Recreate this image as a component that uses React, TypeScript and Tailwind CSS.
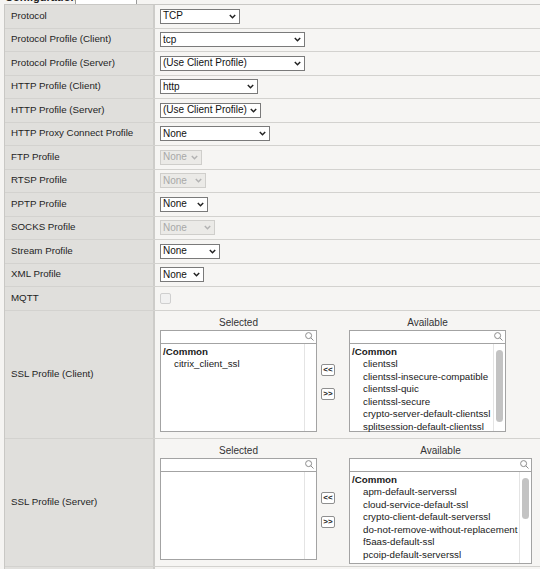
import clsx from 'clsx';

type SelectSpec = { value: string; width: string; disabled?: boolean };
type Row = { label: string; select?: SelectSpec; checkbox?: boolean };

const rows: Row[] = [
  { label: 'Protocol', select: { value: 'TCP', width: 'w-[80px]' } },
  { label: 'Protocol Profile (Client)', select: { value: 'tcp', width: 'w-[145px]' } },
  { label: 'Protocol Profile (Server)', select: { value: '(Use Client Profile)', width: 'w-[145px]' } },
  { label: 'HTTP Profile (Client)', select: { value: 'http', width: 'w-[98px]' } },
  { label: 'HTTP Profile (Server)', select: { value: '(Use Client Profile)', width: 'w-[101px]' } },
  { label: 'HTTP Proxy Connect Profile', select: { value: 'None', width: 'w-[110px]' } },
  { label: 'FTP Profile', select: { value: 'None', width: 'w-[42px]', disabled: true } },
  { label: 'RTSP Profile', select: { value: 'None', width: 'w-[46px]', disabled: true } },
  { label: 'PPTP Profile', select: { value: 'None', width: 'w-[48px]' } },
  { label: 'SOCKS Profile', select: { value: 'None', width: 'w-[55px]', disabled: true } },
  { label: 'Stream Profile', select: { value: 'None', width: 'w-[60px]' } },
  { label: 'XML Profile', select: { value: 'None', width: 'w-[44px]' } },
  { label: 'MQTT', checkbox: true },
];

function Chevron({ disabled }: { disabled?: boolean }) {
  return (
    <svg width="7" height="5" viewBox="0 0 7 5" fill="none" stroke={disabled ? '#b3b3b3' : '#222'} strokeWidth="1.5">
      <path d="M0.8 1 L3.5 3.7 L6.2 1" />
    </svg>
  );
}

function Select({ value, width, disabled }: SelectSpec) {
  return (
    <div
      className={clsx(
        'flex h-[15px] items-center justify-between border pl-[2px] pr-[3px] text-[10px] leading-none',
        width,
        disabled ? 'border-[#cfcecb] bg-[#ebeae7] text-[#a8a8a8]' : 'border-[#7a7a7a] bg-white text-[#111]'
      )}
    >
      <span className="whitespace-nowrap">{value}</span>
      <Chevron disabled={disabled} />
    </div>
  );
}

function SearchIcon() {
  return (
    <svg width="9" height="9" viewBox="0 0 9 9" fill="none" stroke="#8c8c8c" strokeWidth="1">
      <circle cx="3.6" cy="3.6" r="3" />
      <path d="M5.8 5.8 L8.5 8.5" />
    </svg>
  );
}

type ListProps = {
  title: string;
  width: string;
  listHeight: string;
  items: string[];
  thumb?: string;
};

function ListBox({ title, width, listHeight, items, thumb }: ListProps) {
  return (
    <div className={clsx('flex flex-col', width)}>
      <div className="h-[15px] text-center text-[10px] leading-[15px] text-[#333]">{title}</div>
      <div className="flex h-[14px] items-center justify-end border border-[#a3a3a3] bg-white pr-[2px]">
        <SearchIcon />
      </div>
      <div className={clsx('flex border-x border-b border-[#a3a3a3] bg-white', listHeight)}>
        <div className="flex-1 pt-[2px] pl-[2px] text-[9.75px] leading-[12.6px] text-[#1a1a1a]">
          {items.length > 0 && <div className="font-bold">/Common</div>}
          {items.map((item) => (
            <div key={item} className="whitespace-nowrap pl-[11px]">
              {item}
            </div>
          ))}
        </div>
        <div className="w-[12px] border-l border-[#e4e4e4] pt-[6px] pl-[2px]">
          {thumb && <div className={clsx('w-[7px] rounded-full bg-[#c3c3c3]', thumb)} />}
        </div>
      </div>
    </div>
  );
}

function MoveButtons() {
  return (
    <div className="mt-[49px] ml-[4px] mr-[14px] flex flex-col gap-[12px]">
      {['<<', '>>'].map((t) => (
        <div
          key={t}
          className="flex h-[12px] w-[14px] items-center justify-center rounded-[2px] border border-[#8f8f8f] bg-white text-[8px] font-bold leading-none text-[#222]"
        >
          {t}
        </div>
      ))}
    </div>
  );
}

function SslRow({
  label,
  selected,
  available,
  availWidth,
  availHeight,
  thumb,
}: {
  label: string;
  selected: string[];
  available: string[];
  availWidth: string;
  availHeight: string;
  thumb: string;
}) {
  return (
    <div className="flex h-[128px] border-b border-[#d3d2cf]">
      <div className="flex w-[150px] shrink-0 items-center border-r-2 border-[#cdccc9] bg-[#e0dfdc] pl-[6px] text-[9.75px] text-[#1e1e1e]">
        {label}
      </div>
      <div className="flex flex-1 items-start bg-[#f6f5f3] pt-[4px] pl-[5px]">
        <ListBox title="Selected" width="w-[157px]" listHeight="h-[88px]" items={selected} />
        <MoveButtons />
        <ListBox title="Available" width={availWidth} listHeight={availHeight} items={available} thumb={thumb} />
      </div>
    </div>
  );
}

export default function App() {
  return (
    <div className="h-[569px] overflow-hidden bg-[#f5f4f2] font-['Liberation_Sans',Arial,sans-serif]">
      <div className="h-[4px] overflow-hidden">
        <div className="-mt-[11px] flex items-center pl-[5px]">
          <span className="w-[70px] text-[11px] font-bold text-[#222]">Configuration:</span>
          <div className="mt-[2px] h-[13px] w-[62px] border border-[#9a9a9a] bg-white" />
        </div>
      </div>
      <div className="ml-[4px] border-t border-l border-[#c9c8c5]">
        {rows.map((row) => (
          <div key={row.label} className="flex h-[23.5px] border-b border-[#d3d2cf]">
            <div className="flex w-[150px] shrink-0 items-center border-r-2 border-[#cdccc9] bg-[#e0dfdc] pl-[6px] text-[9.75px] whitespace-nowrap text-[#1e1e1e]">
              {row.label}
            </div>
            <div className="flex flex-1 items-center bg-[#f6f5f3] pl-[5px]">
              {row.select && <Select {...row.select} />}
              {row.checkbox && (
                <div className="h-[11px] w-[11px] rounded-[2px] border border-[#cfcfcf] bg-[#f1f1f1]" />
              )}
            </div>
          </div>
        ))}
        <SslRow
          label="SSL Profile (Client)"
          selected={['citrix_client_ssl']}
          available={[
            'clientssl',
            'clientssl-insecure-compatible',
            'clientssl-quic',
            'clientssl-secure',
            'crypto-server-default-clientssl',
            'splitsession-default-clientssl',
          ]}
          availWidth="w-[157px]"
          availHeight="h-[88px]"
          thumb="h-[72px]"
        />
        <SslRow
          label="SSL Profile (Server)"
          selected={[]}
          available={[
            'apm-default-serverssl',
            'cloud-service-default-ssl',
            'crypto-client-default-serverssl',
            'do-not-remove-without-replacement',
            'f5aas-default-ssl',
            'pcoip-default-serverssl',
          ]}
          availWidth="w-[183px]"
          availHeight="h-[92px]"
          thumb="h-[41px]"
        />
        <div className="flex h-[24px]">
          <div className="w-[150px] shrink-0 border-r-2 border-[#cdccc9] bg-[#e0dfdc]" />
          <div className="flex-1 bg-[#f6f5f3]" />
        </div>
      </div>
    </div>
  );
}
